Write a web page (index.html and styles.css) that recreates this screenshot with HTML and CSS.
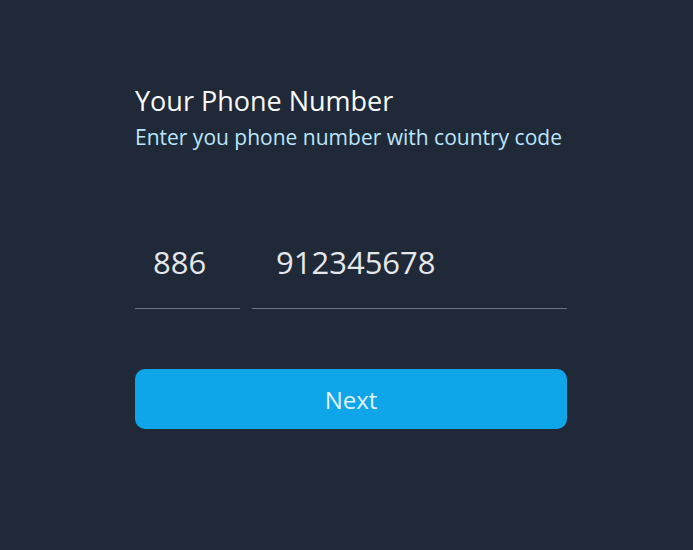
FILE: index.html
```html
<!DOCTYPE html>
<html>
<head>
<meta charset="utf-8">
<link rel="stylesheet" href="styles.css">
</head>
<body>
<main class="page">
  <section class="card">
    <h1 class="title">Your Phone Number</h1>
    <p class="subtitle">Enter you phone number with country code</p>
    <div class="fields">
      <input class="field code" type="text" value="886">
      <input class="field phone" type="text" value="912345678">
    </div>
    <button class="next">Next</button>
  </section>
</main>
</body>
</html>
```

FILE: styles.css
```css
html, body {
  margin: 0;
  padding: 0;
  background: #1f2937;
  height: 100%;
}
body {
  font-family: "Open Sans", "Noto Sans", sans-serif;
}
.page {
  display: flex;
  padding: 82px 0 0 135px;
}
.card {
  width: 432px;
  display: flex;
  flex-direction: column;
}
.title {
  margin: 0;
  font-weight: 400;
  font-size: 27px;
  line-height: 38px;
  color: #f9fafb;
}
.subtitle {
  margin: 3px 0 0;
  font-size: 21px;
  line-height: 28px;
  color: #bae6fd;
}
.fields {
  display: flex;
  gap: 12px;
  margin-top: 78px;
}
.field {
  font-family: inherit;
  background: transparent;
  border: none;
  border-bottom: 1px solid #6b7280;
  color: #e5e7eb;
  font-size: 31px;
  height: 80px;
  padding: 0 0 14px 18px;
  box-sizing: border-box;
  outline: none;
  min-width: 0;
}
.code { width: 105px; }
.phone { flex: 1; padding-left: 24px; }
.next {
  margin-top: 60px;
  height: 60px;
  border: none;
  border-radius: 10px;
  background: #0ea5e9;
  color: #e0f2fe;
  font-family: inherit;
  font-size: 24px;
  cursor: pointer;
}
```
